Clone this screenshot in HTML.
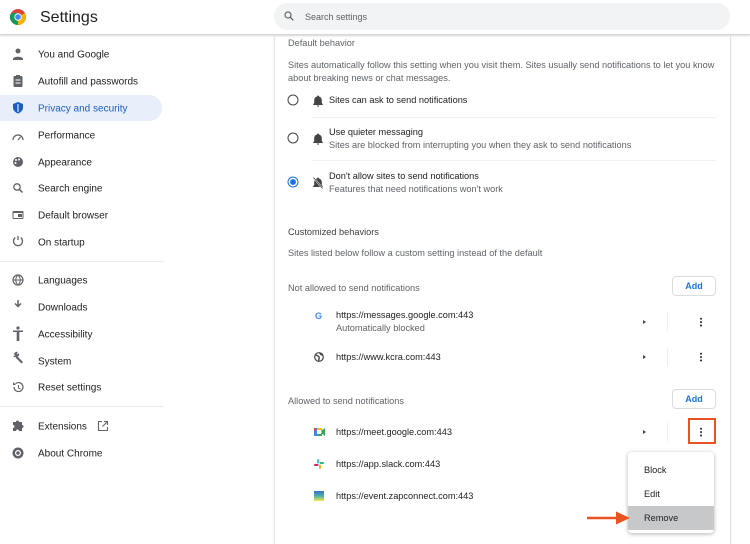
<!DOCTYPE html>
<html><head><meta charset="utf-8"><style>
*{margin:0;padding:0;box-sizing:border-box}
body{width:750px;height:544px;overflow:hidden;background:#fff;font-family:"Liberation Sans",sans-serif;color:#202124;position:relative}
.a{position:absolute;white-space:nowrap}
.nav{font-size:10px;left:38px;color:#202124;transform:translateY(-40%)}
.t{font-size:9.2px;transform:translateY(-50%)}
.g{color:#5f6368}
.sep{position:absolute;height:1px;background:#ececec}
.radio{position:absolute;width:11px;height:11px;border:1.5px solid #444;border-radius:50%;transform:translate(-50%,-50%)}
.btn{position:absolute;width:44px;height:20px;border:1px solid #dadce0;border-radius:4px;color:#1a73e8;font-size:9px;font-weight:bold;text-align:center;line-height:18px}
.dots{position:absolute;width:2px;height:10px;transform:translate(-50%,-50%);background:radial-gradient(circle,#333 0.9px,transparent 1.1px) 0 0/2px 3.4px}
.tri{position:absolute;width:0;height:0;border-left:3px solid #444;border-top:2.5px solid transparent;border-bottom:2.5px solid transparent;transform:translateY(-50%)}
.vd{position:absolute;width:1px;height:18px;background:#eee;transform:translateY(-50%)}
</style></head><body>
<!-- header -->
<div class="a" style="left:0;top:0;width:750px;height:35px;border-bottom:1px solid #d6d6d6;box-shadow:0 1px 2px rgba(0,0,0,.15)"></div>
<svg class="a" style="left:10px;top:9px" width="16" height="16" viewBox="0 0 16 16"><circle cx="8" cy="8" r="8" fill="#db4437"/><path d="M8 8 L1.1 12 A8 8 0 0 0 8 16 Z" fill="#0f9d58"/><path d="M8 8 L1.1 12 A8 8 0 0 1 1.1 4 L8 4Z" fill="#0f9d58"/><path d="M8 8 L14.9 4 A8 8 0 0 1 8 16 Z" fill="#f4b400"/><circle cx="8" cy="8" r="3.7" fill="#fff"/><circle cx="8" cy="8" r="2.8" fill="#4285f4"/></svg>
<div class="a" style="left:40px;top:9px;font-size:16px">Settings</div>
<div class="a" style="left:274px;top:3px;width:456px;height:27px;background:#f1f3f4;border-radius:14px"></div>
<svg class="a" style="left:284px;top:11px" width="10" height="10" viewBox="0 0 10 10"><circle cx="4" cy="4" r="3" fill="none" stroke="#5f6368" stroke-width="1.2"/><path d="M6.2 6.2 9.3 9.3" stroke="#5f6368" stroke-width="1.3"/></svg>
<div class="a" style="left:305px;top:12px;font-size:9px;color:#5f6368">Search settings</div>

<!-- sidebar -->
<div class="a" style="left:0;top:95px;width:162px;height:26px;background:#e8effb;border-radius:0 13px 13px 0"></div>
<div class="a nav" style="top:54px">You and Google</div>
<div class="a nav" style="top:81px">Autofill and passwords</div>
<div class="a nav" style="top:108px;color:#1b5ec4">Privacy and security</div>
<div class="a nav" style="top:135px">Performance</div>
<div class="a nav" style="top:162px">Appearance</div>
<div class="a nav" style="top:188px">Search engine</div>
<div class="a nav" style="top:215px">Default browser</div>
<div class="a nav" style="top:242px">On startup</div>
<div class="sep" style="left:0;top:261px;width:164px"></div>
<div class="a nav" style="top:280px">Languages</div>
<div class="a nav" style="top:307px">Downloads</div>
<div class="a nav" style="top:334px">Accessibility</div>
<div class="a nav" style="top:361px">System</div>
<div class="a nav" style="top:387px">Reset settings</div>
<div class="sep" style="left:0;top:406px;width:164px"></div>
<div class="a nav" style="top:426px">Extensions</div>
<div class="a nav" style="top:453px">About Chrome</div>
<svg class="a" style="left:97px;top:420px" width="12" height="12" viewBox="0 0 12 12"><path d="M5 1.5H1.5v9h9V7M7 1.5h3.5V5M10.5 1.5 5.5 6.5" fill="none" stroke="#5f6368" stroke-width="1.1"/></svg>
<!-- sidebar icons -->
<svg class="a" style="left:11px;top:48px" width="14" height="260" viewBox="0 0 14 260" fill="#5f6368">
<circle cx="7" cy="3" r="2.5"/><path d="M2 11c0-3 10-3 10 0v1H2z"/>
<rect x="2.5" y="28" width="9" height="11" rx="1"/><rect x="5" y="27" width="4" height="2" fill="#5f6368"/><path d="M4.5 32h5M4.5 35h5" stroke="#fff" stroke-width="1"/>
<path d="M7 54l5 2v3.5c0 3-2.5 5-5 6-2.5-1-5-3-5-6V56z" fill="#1b5ec4"/><path d="M7 56v8" stroke="#fff" stroke-width="1"/>
<path d="M2 92a5 5 0 1 1 10 0" fill="none" stroke="#5f6368" stroke-width="1.3"/><path d="M7 92l2.5-3" stroke="#5f6368" stroke-width="1.2"/>
<circle cx="7" cy="114" r="5"/><circle cx="5" cy="112" r="1" fill="#fff"/><circle cx="8" cy="111.5" r="1" fill="#fff"/><circle cx="4.5" cy="115" r="1" fill="#fff"/>
<circle cx="6" cy="139" r="3.2" fill="none" stroke="#5f6368" stroke-width="1.3"/><path d="M8.3 141.3 11.5 144.5" stroke="#5f6368" stroke-width="1.5"/>
<rect x="1.5" y="163" width="11" height="8" rx="1"/><rect x="2.5" y="165" width="9" height="5" fill="#fff"/><rect x="7" y="166" width="4" height="3"/>
<path d="M7 188v4" stroke="#5f6368" stroke-width="1.3"/><path d="M4.3 189.5a4.5 4.5 0 1 0 5.4 0" fill="none" stroke="#5f6368" stroke-width="1.3"/>
<circle cx="7" cy="232" r="5" fill="none" stroke="#5f6368" stroke-width="1.2"/><path d="M2 232h10M7 227c-3 3-3 7 0 10M7 227c3 3 3 7 0 10" fill="none" stroke="#5f6368" stroke-width="1"/>
<path d="M7 252v6M4 255.5l3 3 3-3M3 261h8" fill="none" stroke="#5f6368" stroke-width="1.5"/>
</svg>
<svg class="a" style="left:11px;top:326px" width="14" height="140" viewBox="0 0 14 140" fill="#5f6368">
<circle cx="7" cy="2" r="1.6"/><path d="M2 4.5h10v1.5H8.3v9H6.9v-4H7.1v4H5.7v-9H2z"/>
<path d="M2 31l4-4 1 3-3 1zM6 30l6 6-1.5 1.5-6-6z"/><path d="M3 28a3 3 0 0 1 4-2l-2 2 1 1 2-2a3 3 0 0 1-2 4z"/>
<path d="M3 61a4.5 4.5 0 1 0 1.5-3.3" fill="none" stroke="#5f6368" stroke-width="1.2"/><path d="M2 56v3h3z"/><path d="M7.5 59v3l2 1" fill="none" stroke="#5f6368" stroke-width="1"/>
<path d="M2 96h3a1.5 1.5 0 0 1 3 0h3v3a1.5 1.5 0 0 1 0 3v3H8a1.5 1.5 0 0 0-3 0H2v-3a1.5 1.5 0 0 0 0-3z"/>
<circle cx="7" cy="127" r="5.5"/><circle cx="7" cy="127" r="3" fill="#fff"/><circle cx="7" cy="127" r="1.8"/>
</svg>

<!-- card -->
<div class="a" style="left:274px;top:36px;width:457px;height:508px;border-left:1px solid #e3e3e3;border-right:1px solid #e3e3e3;box-shadow:0 0 2px rgba(0,0,0,.06)"></div>
<div class="a t g" style="left:288px;top:43px">Default behavior</div>
<div class="a g" style="left:288px;top:59px;font-size:9.2px;line-height:13px;white-space:normal;width:436px">Sites automatically follow this setting when you visit them. Sites usually send notifications to let you know about breaking news or chat messages.</div>
<div class="radio" style="left:293px;top:100px"></div>
<div class="radio" style="left:293px;top:138px"></div>
<div class="radio" style="left:293px;top:182px;border-color:#1a73e8;background:radial-gradient(circle,#1a73e8 2.6px,#fff 3.2px)"></div>
<svg class="a" style="left:313px;top:95px" width="10" height="100" viewBox="0 0 10 100" fill="#444"><path d="M5 0.5a1 1 0 0 1 1 1c2 .6 2.8 2 2.8 4v2.5l1 1.3v.7H.2v-.7l1-1.3V5.5c0-2 .8-3.4 2.8-4a1 1 0 0 1 1-1zM3.8 10.5h2.4a1.2 1.2 0 0 1-2.4 0z"/>
<path d="M5 38.5a1 1 0 0 1 1 1c2 .6 2.8 2 2.8 4v2.5l1 1.3v.7H.2v-.7l1-1.3V43.5c0-2 .8-3.4 2.8-4a1 1 0 0 1 1-1zM3.8 48.5h2.4a1.2 1.2 0 0 1-2.4 0z"/>
<path d="M5 82.5a1 1 0 0 1 1 1c2 .6 2.8 2 2.8 4v2.5l1 1.3v.7H.2v-.7l1-1.3V87.5c0-2 .8-3.4 2.8-4a1 1 0 0 1 1-1z"/><path d="M0.5 82.5l9 11" stroke="#fff" stroke-width="1.8"/><path d="M0.5 82.5l9 11" stroke="#444" stroke-width="0.9"/></svg>
<div class="a t" style="left:329px;top:100px">Sites can ask to send notifications</div>
<div class="sep" style="left:312px;top:117px;width:404px;background:#f0f0f0"></div>
<div class="a t" style="left:329px;top:132px">Use quieter messaging</div>
<div class="a t g" style="left:329px;top:145px">Sites are blocked from interrupting you when they ask to send notifications</div>
<div class="sep" style="left:312px;top:160px;width:404px;background:#f0f0f0"></div>
<div class="a t" style="left:329px;top:176px">Don't allow sites to send notifications</div>
<div class="a t g" style="left:329px;top:189px">Features that need notifications won't work</div>

<div class="a t" style="left:288px;top:232px;color:#3c4043">Customized behaviors</div>
<div class="a t g" style="left:288px;top:253px">Sites listed below follow a custom setting instead of the default</div>
<div class="a t g" style="left:288px;top:288px">Not allowed to send notifications</div>
<div class="btn" style="left:672px;top:276px">Add</div>
<div class="a" style="left:315px;top:316px;font-size:9px;font-weight:bold;color:#4285f4;transform:translateY(-50%)">G</div>
<div class="a t" style="left:336px;top:315px">https://messages.google.com:443</div>
<div class="a t g" style="left:336px;top:328px">Automatically blocked</div>
<div class="tri" style="left:643px;top:322px"></div><div class="vd" style="left:667px;top:322px"></div><div class="dots" style="left:701px;top:322px"></div>
<svg class="a" style="left:314px;top:352px" width="10" height="10" viewBox="0 0 10 10"><circle cx="5" cy="5" r="4.3" fill="none" stroke="#444" stroke-width="1.2"/><path d="M2 3c1 1 2 0 3 2s-1 2 0 4M6 1c0 1 1 2 3 2" fill="none" stroke="#444" stroke-width="1.4"/></svg>
<div class="a t" style="left:336px;top:357px">https://www.kcra.com:443</div>
<div class="tri" style="left:643px;top:357px"></div><div class="vd" style="left:667px;top:357px"></div><div class="dots" style="left:701px;top:357px"></div>

<div class="a t g" style="left:288px;top:401px">Allowed to send notifications</div>
<div class="btn" style="left:672px;top:389px">Add</div>
<svg class="a" style="left:314px;top:428px" width="11" height="8" viewBox="0 0 11 8"><rect x="0" y="0" width="4" height="8" fill="#4285f4"/><rect x="3" y="0" width="5" height="3" fill="#fbbc04"/><rect x="3" y="5" width="5" height="3" fill="#34a853"/><rect x="3" y="2" width="4" height="4" fill="#fff"/><path d="M7.5 2.5 11 0v8L7.5 5.5z" fill="#34a853"/><rect x="0" y="0" width="2" height="3" fill="#ea4335"/></svg>
<div class="a t" style="left:336px;top:432px">https://meet.google.com:443</div>
<div class="tri" style="left:643px;top:432px"></div><div class="vd" style="left:667px;top:432px"></div><div class="dots" style="left:701px;top:432px"></div>
<div class="a" style="left:688px;top:418px;width:28px;height:26px;border:2.5px solid #e8531f"></div>
<svg class="a" style="left:314px;top:459px" width="10" height="10" viewBox="0 0 10 10"><rect x="3" y="0" width="2" height="4.5" rx="1" fill="#36c5f0"/><rect x="0" y="5" width="4.5" height="2" rx="1" fill="#e01e5a"/><rect x="5" y="5.5" width="2" height="4.5" rx="1" fill="#ecb22e"/><rect x="5.5" y="3" width="4.5" height="2" rx="1" fill="#2eb67d"/></svg>
<div class="a t" style="left:336px;top:464px">https://app.slack.com:443</div>
<div class="a" style="left:314px;top:491px;width:10px;height:10px;background:linear-gradient(#3b6fd1,#4bb0a8 50%,#f4e94a)"></div>
<div class="a t" style="left:336px;top:496px">https://event.zapconnect.com:443</div>

<!-- menu -->
<div class="a" style="left:628px;top:452px;width:86px;height:81px;background:#fff;border-radius:4px;box-shadow:0 1px 4px rgba(0,0,0,.3)"></div>
<div class="a" style="left:628px;top:506px;width:86px;height:24px;background:#c6c8ca"></div>
<div class="a t" style="left:644px;top:470px">Block</div>
<div class="a t" style="left:644px;top:494px">Edit</div>
<div class="a t" style="left:644px;top:518px">Remove</div>
<svg class="a" style="left:587px;top:511px" width="44" height="14" viewBox="0 0 44 14"><path d="M0 7h32" stroke="#e8531f" stroke-width="2.5"/><path d="M29 0.5 43 7 29 13.5z" fill="#e8531f"/></svg>
</body></html>
